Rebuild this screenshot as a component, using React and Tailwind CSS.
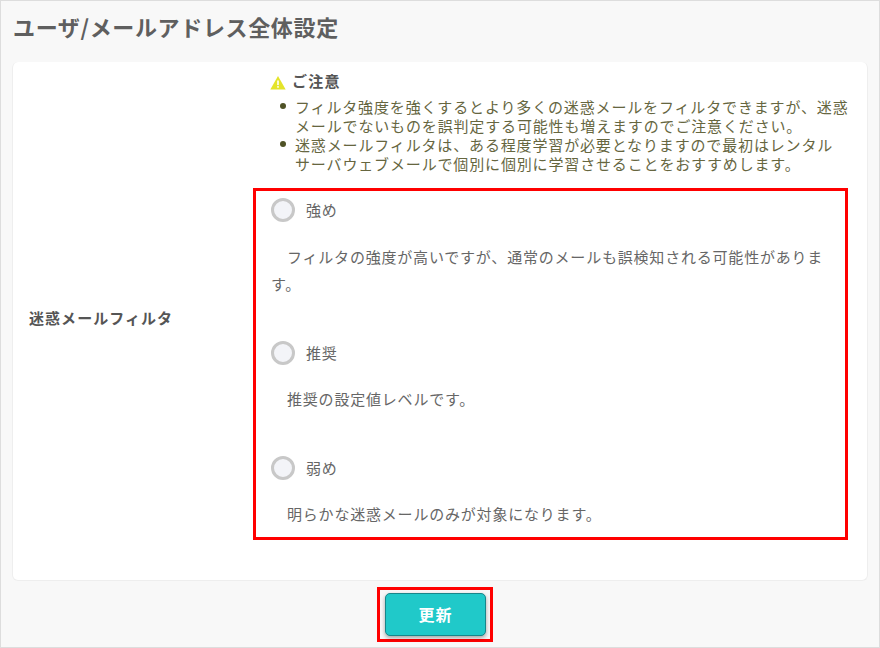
function Option({ label, children, className }) {
  return (
    <div className={className}>
      <div className="flex items-center h-[24px]">
        <span className="w-[24px] h-[24px] rounded-full bg-[#f3f4f8] border-[3px] border-[#c8c8c8] shrink-0" />
        <span className="ml-[11px] text-[15px] tracking-[0.8px] text-[#666]">{label}</span>
      </div>
      {children}
    </div>
  );
}

export default function App() {
  return (
    <div className="w-[880px] h-[648px] bg-[#f8f8f8] border border-[#dddddd] flex flex-col font-['Noto_Sans_CJK_JP','Noto_Sans_CJK_SC',sans-serif] overflow-hidden">
      <h1 className="h-[61px] pl-[12px] pt-[10px] text-[22px] leading-[30px] font-bold tracking-[0.65px] text-[#5f5f5f] shrink-0">ユーザ/メールアドレス全体設定</h1>
      <div className="mx-[11px] h-[519px] bg-white rounded-[6px] border border-t-0 border-[#eeeeee] flex shrink-0">
        <div className="w-[240px] shrink-0 flex items-center pl-[16px] pb-[5px] text-[15px] font-bold tracking-[1.05px] text-[#555]">迷惑メールフィルタ</div>
        <div className="w-[595px] shrink-0">
          <div className="h-[126px] pl-[17px] pt-[8px]">
            <div className="flex items-center h-[22px] text-[15px] font-bold tracking-[1.2px] text-[#555]">
              <svg className="w-[16px] h-[15px] mr-[6px] mt-[2px]" viewBox="0 0 16 14">
                <path d="M8 0.5 L15.7 14 H0.3 Z" fill="#e4e42a" />
                <rect x="7.2" y="5" width="1.6" height="4.6" fill="#fff" />
                <rect x="7.2" y="10.6" width="1.6" height="1.6" fill="#fff" />
              </svg>
              ご注意
            </div>
            <ul className="mt-[5px] text-[15px] leading-[19px] tracking-[0.85px] text-[#66663f]">
              <li className="flex"><span className="w-[6px] h-[6px] mt-[6px] ml-[10px] mr-[9px] rounded-full bg-[#4f5226] shrink-0" /><span className="w-[560px] whitespace-nowrap">フィルタ強度を強くするとより多くの迷惑メールをフィルタできますが、迷惑<br />メールでないものを誤判定する可能性も増えますのでご注意ください。</span></li>
              <li className="flex"><span className="w-[6px] h-[6px] mt-[6px] ml-[10px] mr-[9px] rounded-full bg-[#4f5226] shrink-0" /><span className="w-[560px] whitespace-nowrap">迷惑メールフィルタは、ある程度学習が必要となりますので最初はレンタル<br />サーバウェブメールで個別に個別に学習させることをおすすめします。</span></li>
            </ul>
          </div>
          <div className="h-[352px] border-[3px] border-[#ff0000] pl-[15px] pr-[15px] pt-[7px]">
            <Option label="強め">
              <p className="mt-[21px] text-[15px] leading-[27px] tracking-[0.8px] text-[#666] indent-[16px]">フィルタの強度が高いですが、通常のメールも誤検知される可能性があります。</p>
            </Option>
            <Option label="推奨" className="mt-[44px]">
              <p className="mt-[20px] text-[15px] leading-[27px] tracking-[0.8px] text-[#666] indent-[16px]">推奨の設定値レベルです。</p>
            </Option>
            <Option label="弱め" className="mt-[44px]">
              <p className="mt-[20px] text-[15px] leading-[27px] tracking-[0.8px] text-[#666] indent-[16px]">明らかな迷惑メールのみが対象になります。</p>
            </Option>
          </div>
        </div>
      </div>
      <div className="flex justify-center mt-[6px] pr-[10px]">
        <div className="w-[116px] h-[55px] border-[3px] border-[#ff0000] flex items-center justify-center pl-[1px]">
          <button className="w-[101px] h-[43px] pb-[2px] rounded-[5px] bg-[#20c9c9] border border-[#18868a] shadow-[0_2px_4px_rgba(0,0,0,0.35)] text-white font-bold text-[16px] tracking-[1px]">更新</button>
        </div>
      </div>
    </div>
  );
}
